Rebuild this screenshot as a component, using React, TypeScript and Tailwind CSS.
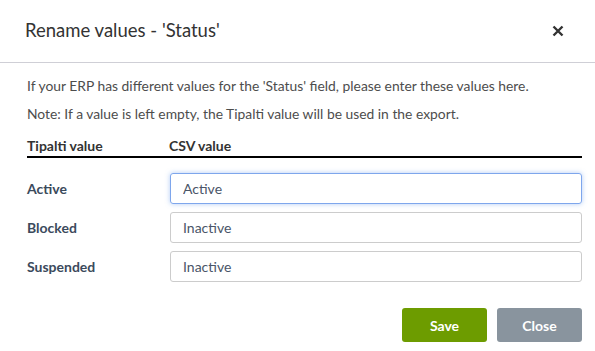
import { useState } from "react";

const rows = [
  { label: "Active", value: "Active" },
  { label: "Blocked", value: "Inactive" },
  { label: "Suspended", value: "Inactive" },
];

export default function App() {
  const [values, setValues] = useState(rows.map((r) => r.value));

  return (
    <div className="h-[351px] w-[595px] bg-white font-['Lato',sans-serif]">
      {/* Header */}
      <div className="flex h-[63px] items-center justify-between border-b border-[#cfcfd6] pl-[25px] pr-[27px]">
        <h2 className="text-[18.5px] text-[#333333]">Rename values - 'Status'</h2>
        <button className="grid h-5 w-5 place-items-center text-[#333]">
          <svg width="12" height="12" viewBox="0 0 12 12">
            <path d="M1.5 1.5 L10.5 10.5 M10.5 1.5 L1.5 10.5" stroke="currentColor" strokeWidth="2.4" strokeLinecap="butt" />
          </svg>
        </button>
      </div>

      {/* Body */}
      <div className="pl-[27px] pr-[13px] pt-[9px]">
        <p className="text-[13.85px] leading-[28px] text-[#4d4d4d]">
          If your ERP has different values for the 'Status' field, please enter these values here.
        </p>
        <p className="text-[13.85px] leading-[28px] text-[#4d4d4d]">
          Note: If a value is left empty, the Tipalti value will be used in the export.
        </p>

        <div className="mt-[7px] flex h-[23px] border-b-2 border-black text-[14px] font-bold leading-[21px] text-[#333]">
          <div className="w-[142px]">Tipalti value</div>
          <div>CSV value</div>
        </div>

        <div className="mt-[15px] flex flex-col gap-[8px]">
          {rows.map((r, i) => (
            <div key={r.label} className="flex items-center">
              <label className="w-[143px] text-[14px] font-bold text-[#3b4a5c]">{r.label}</label>
              <input
                autoFocus={i === 0}
                value={values[i]}
                onChange={(e) => setValues(values.map((v, j) => (j === i ? e.target.value : v)))}
                className="h-[31px] flex-1 rounded-[3px] border border-[#cccccc] px-[12px] text-[14px] text-[#4a5568] caret-[#333] outline-none focus:border-[#7ea6ec] focus:shadow-[0_0_5px_rgba(102,153,238,0.5)]"
              />
            </div>
          ))}
        </div>

        <div className="mt-[26px] flex justify-end gap-[10px]">
          <button className="h-[34px] w-[85px] rounded-[3px] bg-[#6d9c00] text-[14px] font-bold text-white">Save</button>
          <button className="h-[34px] w-[85px] rounded-[3px] bg-[#89949e] text-[14px] font-bold text-white">Close</button>
        </div>
      </div>
    </div>
  );
}
